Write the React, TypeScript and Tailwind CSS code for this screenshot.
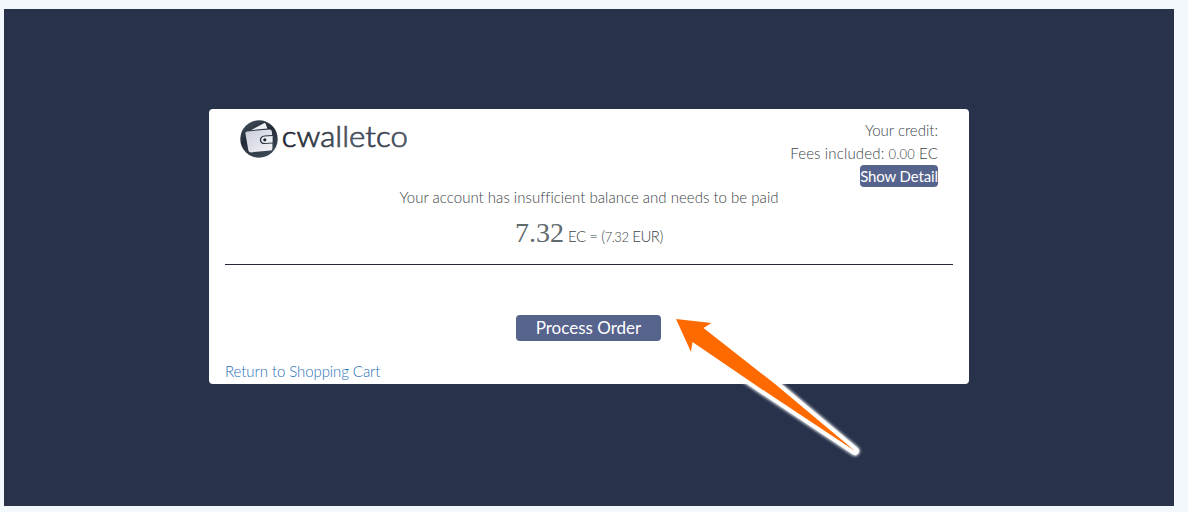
import React from "react";

const Logo = () => {
  return (
    <svg width="170" height="40" viewBox="0 0 170 40" className="block">
      <defs>
        <linearGradient id="disc" x1="0" y1="0" x2="0.5" y2="1">
          <stop offset="0" stopColor="#46525d" />
          <stop offset="0.5" stopColor="#242b38" />
          <stop offset="1" stopColor="#3a4653" />
        </linearGradient>
        <linearGradient id="wallet" x1="0" y1="0" x2="1" y2="1">
          <stop offset="0" stopColor="#c9ccd8" />
          <stop offset="1" stopColor="#f4f5f9" />
        </linearGradient>
        <linearGradient id="word" x1="0" y1="0" x2="1" y2="0">
          <stop offset="0" stopColor="#1d212c" />
          <stop offset="0.55" stopColor="#485562" />
          <stop offset="0.75" stopColor="#343d4a" />
          <stop offset="1" stopColor="#4c5763" />
        </linearGradient>
      </defs>
      <circle cx="19" cy="20" r="18.7" fill="url(#disc)" />
      <path d="M11 11.2 24 4.2 Q25.2 3.8 25.7 5 L27.4 9.4Z" fill="#eef0f5" />
      <path
        d="M5.4 14.6Q5.2 12.8 7 12.5L29.4 10.4Q31.4 10.2 31.8 12.2L32.2 16 24.5 16.4Q19.6 17.2 19.9 21.4 20.4 25.3 25 25.1L32.4 24.6 32.4 29.4Q32.4 31.2 30.6 31.4L10.8 33.4Q8.8 33.5 8.4 31.6Z"
        fill="url(#wallet)"
      />
      <path
        d="M24.8 17.6 32.6 17.1V23.5L25 24.1Q21.4 24 21.2 21 21.2 18 24.8 17.6Z"
        fill="#eceef4"
      />
      <circle cx="24.8" cy="20.8" r="1.6" fill="#1f2632" />
      <text
        x="41.8"
        y="28.2"
        fontSize="28.5"
        textLength="126"
        lengthAdjust="spacingAndGlyphs"
        fill="url(#word)"
        stroke="url(#word)"
        strokeWidth="0.7"
        fontWeight="300"
        fontFamily="Lato, sans-serif"
      >
        cwalletco
      </text>
    </svg>
  );
};

const Arrow = () => {
  return (
    <svg
      width="230"
      height="180"
      viewBox="660 300 230 180"
      className="absolute left-[660px] top-[300px] pointer-events-none"
    >
      <defs>
        <filter id="glow" x="-20%" y="-20%" width="140%" height="140%">
          <feGaussianBlur stdDeviation="1.6" />
        </filter>
      </defs>
      <g fill="#fff" stroke="#fff" strokeLinejoin="round">
        <path
          d="M676 319 711.5 323 703.5 328 775 384 855 451 757 386 692.5 342 691 352Z"
          strokeWidth="9.5"
          filter="url(#glow)"
        />
        <path
          d="M676 319 711.5 323 703.5 328 775 384 855 451 757 386 692.5 342 691 352Z"
          strokeWidth="8"
        />
      </g>
      <path
        d="M676 319 711.5 323 703.5 328 775 384 855 451 757 386 692.5 342 691 352Z"
        fill="#ff6a00"
      />
    </svg>
  );
};

const App = () => {
  return (
    <div className="relative h-[512px] w-[1188px] overflow-hidden bg-[#f3f8fc] pl-1 pt-[9px] font-['Lato',sans-serif] text-[15px] font-light text-[#3a4447]">
      <main className="h-[497px] w-[1170px] bg-[#28324b] pl-[205px] pt-[100px]">
        <section className="flex h-[275px] w-[760px] flex-col rounded bg-white px-4">
          <div className="flex h-[78px] justify-between px-[15px] pt-[10px]">
            <Logo />
            <div className="flex flex-col items-end">
              <div className="h-[23px] leading-[23px]">Your credit:</div>
              <div className="h-[23px] leading-[23px] tracking-[0.15px]">
                Fees included: <span className="text-[13px]">0.00</span> EC
              </div>
              <button className="h-[22px] w-[78px] whitespace-nowrap rounded bg-[#56638c] font-normal leading-[20px] tracking-[-0.15px] text-white">
                Show Detail
              </button>
            </div>
          </div>
          <p className="h-[22px] text-center leading-[21px] tracking-[0.02px]">
            Your account has insufficient balance and needs to be paid
          </p>
          <div className="flex h-[56px] items-baseline justify-center gap-1 border-b border-[#242633] pt-[8px]">
            <span className="font-['Liberation_Serif',serif] text-[28px] font-normal leading-8 text-[#606a6c]">
              7.32
            </span>
            <span className="tracking-[-0.45px]">
              EC = (<span className="text-[13px]">7.32</span> EUR)
            </span>
          </div>
          <button className="mr-px mt-[50px] h-[26px] w-[145px] shrink-0 self-center rounded bg-[#56638c] text-[17px] font-normal leading-[26px] text-white">
            Process Order
          </button>
          <a
            href="#"
            className="mt-5 self-start leading-[21px] tracking-[-0.08px] text-[#1f70b8]"
          >
            Return to Shopping Cart
          </a>
        </section>
      </main>
      <Arrow />
    </div>
  );
};

export default App;
